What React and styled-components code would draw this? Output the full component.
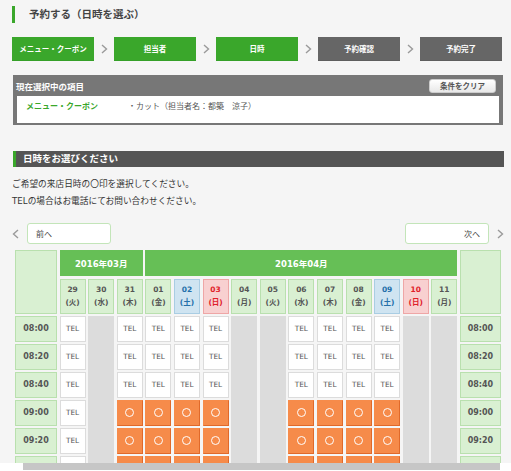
import React from 'react';
import styled, { createGlobalStyle } from 'styled-components';

const GlobalStyle = createGlobalStyle`
  html, body {
    margin: 0;
    padding: 0;
    background: #f5f5f5;
  }
  body {
    font-family: "DejaVu Sans", "Noto Sans CJK JP", sans-serif;
    color: #333;
  }
  * {
    box-sizing: border-box;
  }
`;

const steps = [
  { label: 'メニュー・クーポン', done: true },
  { label: '担当者', done: true },
  { label: '日時', done: true },
  { label: '予約確認', done: false },
  { label: '予約完了', done: false },
];

const days = [
  { d: '29', w: '火', state: 'tel' },
  { d: '30', w: '水', state: 'closed' },
  { d: '31', w: '木', state: 'open' },
  { d: '01', w: '金', state: 'open' },
  { d: '02', w: '土', kind: 'sat', state: 'open' },
  { d: '03', w: '日', kind: 'sun', state: 'open' },
  { d: '04', w: '月', state: 'closed' },
  { d: '05', w: '火', state: 'closed' },
  { d: '06', w: '水', state: 'open' },
  { d: '07', w: '木', state: 'open' },
  { d: '08', w: '金', state: 'open' },
  { d: '09', w: '土', kind: 'sat', state: 'open' },
  { d: '10', w: '日', kind: 'sun', state: 'closed' },
  { d: '11', w: '月', state: 'closed' },
];

const times = ['08:00', '08:20', '08:40', '09:00', '09:20', '09:40', '10:00'];

const Chevron = ({ left }) => (
  <svg width="7" height="10" viewBox="0 0 7 10">
    <polyline
      points={left ? '6,1 1.5,5 6,9' : '1,1 5.5,5 1,9'}
      fill="none"
      stroke="#9a9a9a"
      strokeWidth="1.4"
    />
  </svg>
);

const App = () => {
  return (
    <Page>
      <GlobalStyle />
      <Content>
        <Title>予約する（日時を選ぶ）</Title>

        <Steps>
          {steps.map((s, i) => (
            <React.Fragment key={s.label}>
              {i > 0 && (
                <StepArrow>
                  <Chevron />
                </StepArrow>
              )}
              <Step $done={s.done}>{s.label}</Step>
            </React.Fragment>
          ))}
        </Steps>

        <Selected>
          <SelectedHead>
            <span>現在選択中の項目</span>
            <ClearButton>条件をクリア</ClearButton>
          </SelectedHead>
          <SelectedBody>
            <ItemName>メニュー・クーポン</ItemName>
            <ItemValue>・カット（担当者名：都築　涼子）</ItemValue>
          </SelectedBody>
        </Selected>

        <SectionHead>日時をお選びください</SectionHead>
        <Note>
          ご希望の来店日時の〇印を選択してください。
          <br />
          TELの場合はお電話にてお問い合わせください。
        </Note>

        <Nav>
          <NavSide>
            <Chevron left />
            <NavButton>前へ</NavButton>
          </NavSide>
          <NavSide>
            <NavButton $right>次へ</NavButton>
            <Chevron />
          </NavSide>
        </Nav>

        <Calendar>
          <Corner $col={1} />
          <Corner $col={16} />
          <Month $span="2 / 5">2016年03月</Month>
          <Month $span="5 / 16">2016年04月</Month>
          {days.map((day, i) => (
            <Day key={day.d} $col={i + 2} $kind={day.kind}>
              <b>{day.d}</b>
              <span>({day.w})</span>
            </Day>
          ))}
          {times.map((t, r) => (
            <React.Fragment key={t}>
              <Time $col={1} $row={r + 3}>{t}</Time>
              <Time $col={16} $row={r + 3}>{t}</Time>
            </React.Fragment>
          ))}
          {days.map((day, i) => {
            if (day.state === 'closed') {
              return <Closed key={day.d} $col={i + 2} />;
            }
            return times.map((t, r) => {
              const tel = day.state === 'tel' || t < '09:00';
              return tel ? (
                <TelSlot key={day.d + t} $col={i + 2} $row={r + 3}>
                  TEL
                </TelSlot>
              ) : (
                <OpenSlot key={day.d + t} $col={i + 2} $row={r + 3}>
                  <Ring />
                </OpenSlot>
              );
            });
          })}
        </Calendar>
      </Content>
      <ScrollTrack>
        <ScrollThumb />
      </ScrollTrack>
    </Page>
  );
};

// Styled Components
const Page = styled.div`
  width: 511px;
  height: 471px;
  display: flex;
  flex-direction: column;
  overflow: hidden;
`;

const Content = styled.div`
  flex: 1;
  overflow: hidden;
  padding: 6px 8px 0 12px;
`;

const Title = styled.h1`
  margin: 0;
  height: 17px;
  line-height: 17px;
  border-left: 3px solid #3aa72b;
  padding-left: 14px;
  font-size: 10.5px;
  font-weight: bold;
  color: #444;
`;

const Steps = styled.div`
  display: flex;
  align-items: center;
  margin-top: 14px;
  height: 24px;
`;

const Step = styled.div`
  flex: 0 0 82px;
  height: 24px;
  display: flex;
  align-items: center;
  justify-content: center;
  font-size: 7.5px;
  font-weight: bold;
  color: #fff;
  background: ${(p) => (p.$done ? '#3aa72b' : '#666')};
  border-bottom: 1px solid ${(p) => (p.$done ? '#35a028' : '#5e5e5e')};
`;

const StepArrow = styled.div`
  flex: 0 0 20px;
  display: flex;
  justify-content: center;
`;

const Selected = styled.div`
  margin: 14px 0 0 1px;
  width: 490px;
  background: #777;
  padding: 0 4px 2px 4px;
`;

const SelectedHead = styled.div`
  height: 21px;
  display: flex;
  align-items: center;
  justify-content: space-between;
  padding: 0 3px 0 0;
  margin-left: -1px;
  font-size: 8.5px;
  font-weight: bold;
  color: #fff;
`;

const ClearButton = styled.button`
  width: 67px;
  height: 14px;
  padding: 0;
  border: 1px solid #ccc;
  border-radius: 3px;
  background: linear-gradient(#ffffff, #e8e8e8);
  font-family: inherit;
  font-size: 7.5px;
  font-weight: bold;
  color: #555;
`;

const SelectedBody = styled.div`
  height: 27px;
  background: #fff;
  display: flex;
  align-items: flex-start;
  padding: 4px 0 0 9px;
  font-size: 8px;
`;

const ItemName = styled.div`
  width: 102px;
  font-weight: bold;
  color: #3aa72b;
`;

const ItemValue = styled.div`
  color: #555;
`;

const SectionHead = styled.h2`
  margin: 26px 0 0 1px;
  width: 491px;
  height: 16px;
  line-height: 16px;
  background: #555;
  border-left: 3px solid #3aa72b;
  padding-left: 7px;
  font-size: 9.5px;
  font-weight: bold;
  color: #fff;
`;

const Note = styled.p`
  margin: 9px 0 0 0;
  font-size: 8.7px;
  line-height: 17px;
  color: #333;
`;

const Nav = styled.div`
  margin-top: 13px;
  display: flex;
  justify-content: space-between;
  align-items: center;
  width: 492px;
`;

const NavSide = styled.div`
  display: flex;
  align-items: center;
  gap: 8px;
`;

const NavButton = styled.div`
  width: 84px;
  height: 21px;
  display: flex;
  align-items: center;
  justify-content: ${(p) => (p.$right ? 'flex-end' : 'flex-start')};
  padding: 0 8px;
  background: #fff;
  border: 1px solid #c3e5b9;
  border-radius: 3px;
  font-size: 8px;
  color: #444;
`;

const Calendar = styled.div`
  margin: 6px 0 0 3px;
  width: 486px;
  display: grid;
  grid-template-columns: 42px repeat(14, 26px) 41px;
  grid-template-rows: 26px 35px repeat(${times.length}, 25.4px);
  gap: 2.6px;
`;

const Corner = styled.div`
  grid-column: ${(p) => p.$col};
  grid-row: 1 / 3;
  background: #d9f0d2;
  border: 1px solid #b9e0ae;
`;

const Month = styled.div`
  grid-column: ${(p) => p.$span};
  grid-row: 1;
  background: #66bf56;
  display: flex;
  align-items: center;
  justify-content: center;
  font-size: 8.5px;
  font-weight: bold;
  color: #fff;
`;

const dayColors = {
  sat: { bg: '#cfe4f1', border: '#a9cde3', text: '#2470aa' },
  sun: { bg: '#f8d0d0', border: '#eea6a6', text: '#e0202a' },
  normal: { bg: '#d9f0d2', border: '#b9e0ae', text: '#555' },
};

const Day = styled.div`
  grid-column: ${(p) => p.$col};
  grid-row: 2;
  display: flex;
  flex-direction: column;
  align-items: center;
  justify-content: center;
  background: ${(p) => dayColors[p.$kind || 'normal'].bg};
  border: 1px solid ${(p) => dayColors[p.$kind || 'normal'].border};
  color: ${(p) => dayColors[p.$kind || 'normal'].text};
  font-size: 7.5px;
  line-height: 13px;
  b {
    font-weight: bold;
  }
  span {
    font-weight: bold;
  }
`;

const Time = styled.div`
  grid-column: ${(p) => p.$col};
  grid-row: ${(p) => p.$row};
  display: flex;
  align-items: center;
  justify-content: center;
  background: #d9f0d2;
  border: 1px solid #b9e0ae;
  font-size: 8px;
  font-weight: bold;
  color: #555;
`;

const Slot = styled.div`
  grid-column: ${(p) => p.$col};
  grid-row: ${(p) => p.$row};
  display: flex;
  align-items: center;
  justify-content: center;
`;

const TelSlot = styled(Slot)`
  background: #fff;
  border: 1px solid #dcdcdc;
  font-size: 7.3px;
  color: #555;
`;

const OpenSlot = styled(Slot)`
  background: #f68b4a;
  border: 1px solid #f68b4a;
  border-right-color: #e0692a;
  border-bottom-color: #e0692a;
`;

const Ring = styled.span`
  width: 9px;
  height: 9px;
  border: 1.4px solid #fff;
  border-radius: 50%;
`;

const Closed = styled.div`
  grid-column: ${(p) => p.$col};
  grid-row: 3 / -1;
  background: #dcdcdc;
`;

const ScrollTrack = styled.div`
  flex: 0 0 8px;
  background: #fff;
`;

const ScrollThumb = styled.div`
  margin-left: 23px;
  width: 477px;
  height: 7px;
  background: #c6c6c6;
`;

export default App;
